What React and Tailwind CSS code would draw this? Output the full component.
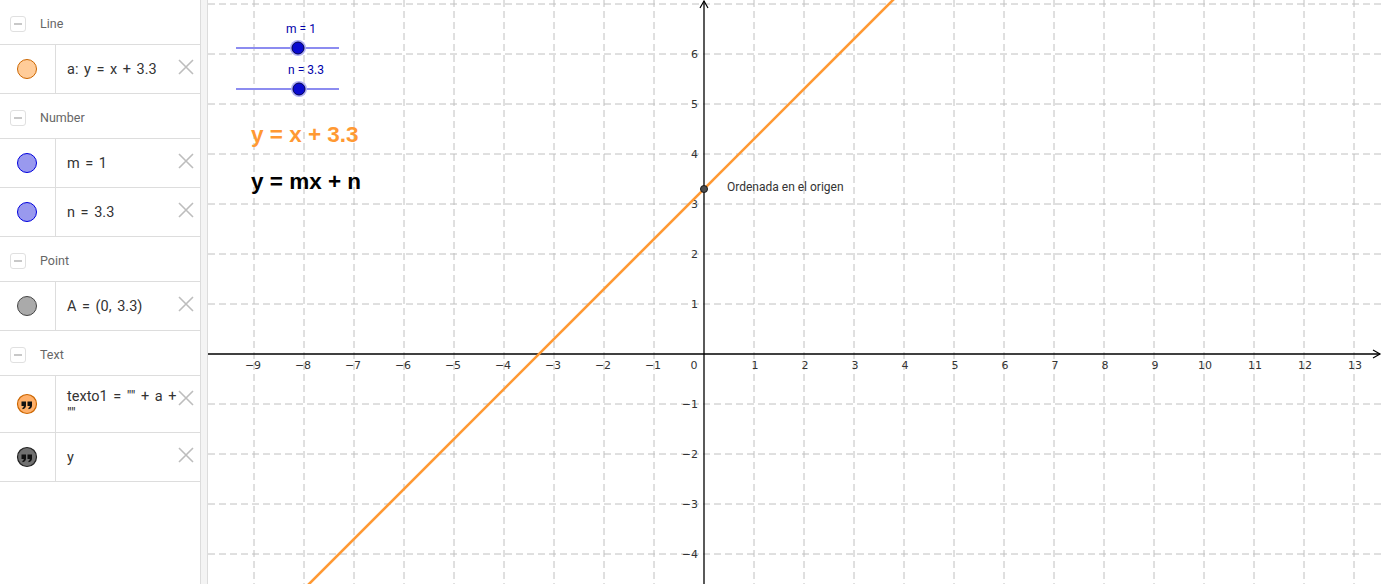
import React from 'react';

const ORANGE = '#ff9933';

function CloseIcon() {
  return (
    <svg width="18" height="18" viewBox="0 0 18 18" className="absolute right-[5px] top-[13px]">
      <path d="M2 2 L16 16 M16 2 L2 16" stroke="#bdbdbd" strokeWidth="1.6" />
    </svg>
  );
}

function Marble({ fill, stroke }) {
  return (
    <svg width="22" height="22" viewBox="0 0 22 22">
      <circle cx="11" cy="11" r="9.5" fill={fill} stroke={stroke} strokeWidth="1" />
    </svg>
  );
}

function QuoteMarble({ fill, stroke }) {
  return (
    <svg width="22" height="22" viewBox="0 0 22 22">
      <circle cx="11" cy="11" r="9.5" fill={fill} stroke={stroke} strokeWidth="1.2" />
      <path d="M5.5 8.5 h4.5 v4 c0 2 -1.2 3.3 -3.3 3.8 l-0.5 -1.2 c1 -0.4 1.6 -1.1 1.6 -2 h-2.3 z" fill="#111" />
      <path d="M11.5 8.5 h4.5 v4 c0 2 -1.2 3.3 -3.3 3.8 l-0.5 -1.2 c1 -0.4 1.6 -1.1 1.6 -2 h-2.3 z" fill="#111" />
    </svg>
  );
}

function GroupHeader({ label }) {
  return (
    <div className="h-[45px] border-b border-[#dddddd] flex items-center pt-[4px]">
      <div className="ml-[10px] w-[16px] h-[16px] rounded-[3px] border border-[#e0e0e0] flex items-center justify-center">
        <div className="w-[8px] h-[2px] bg-[#c8c8c8]" />
      </div>
      <span className="ml-[14px] text-[12.5px] text-[#666666]">{label}</span>
    </div>
  );
}

function Item({ icon, children, tall }) {
  return (
    <div className={`relative flex border-b border-[#dddddd] ${tall ? 'h-[57px]' : 'h-[49px]'}`}>
      <div className="w-[56px] border-r border-[#dddddd] flex items-center justify-center pr-px">{icon}</div>
      <div className="flex-1 flex items-center pl-[11px] text-[14.5px] text-[#333333] leading-[17px] [word-spacing:2px]">{children}</div>
      <CloseIcon />
    </div>
  );
}

function Graph() {
  const vx = [];
  for (let i = -9; i <= 14; i++) if (i !== 0) vx.push(704 + 50 * i);
  const hy = [];
  for (let j = -4; j <= 7; j++) if (j !== 0) hy.push(354 - 50 * j);
  const xl = [];
  for (let i = -9; i <= 13; i++) if (i !== 0) xl.push(i);
  const yl = [];
  for (let j = -4; j <= 6; j++) if (j !== 0) yl.push(j);
  const fmt = (n) => (n < 0 ? '\u2212' + Math.abs(n) : String(n));

  return (
    <svg width="1174" height="584" viewBox="208 0 1174 584" className="block" style={{ fontFamily: 'Roboto, "Liberation Sans", sans-serif' }}>
      <rect x="208" y="0" width="1174" height="584" fill="#ffffff" />
      {vx.map((x) => (
        <line key={'v' + x} x1={x} y1="0" x2={x} y2="584" stroke="#c0c0c0" strokeWidth="1" strokeDasharray="7 4" />
      ))}
      {hy.map((y) => (
        <line key={'h' + y} x1="208" y1={y} x2="1382" y2={y} stroke="#c0c0c0" strokeWidth="1" strokeDasharray="7 4" />
      ))}
      {/* axes */}
      <line x1="208" y1="354" x2="1380" y2="354" stroke="#000" strokeWidth="1.3" />
      <path d="M1373 350 L1380 354 L1373 358" fill="none" stroke="#000" strokeWidth="1.2" />
      <line x1="704" y1="584" x2="704" y2="1" stroke="#000" strokeWidth="1.3" />
      <path d="M700 8 L704 1 L708 8" fill="none" stroke="#000" strokeWidth="1.2" />
      {xl.map((i) => (
        <text key={'xl' + i} x={704 + 50 * i + (i < 0 ? -1 : 1)} y="369" fontSize="11" fill="#333" textAnchor="middle" fontFamily="'DejaVu Sans', sans-serif">
          {fmt(i)}
        </text>
      ))}
      <text x="694" y="369" fontSize="11" fill="#333" textAnchor="middle" fontFamily="'DejaVu Sans', sans-serif">0</text>
      {yl.map((j) => (
        <text key={'yl' + j} x="698" y={354 - 50 * j + 4} fontSize="11" fill="#333" textAnchor="end" fontFamily="'DejaVu Sans', sans-serif">
          {fmt(j)}
        </text>
      ))}
      {/* line y = x + 3.3 */}
      <line x1={704 + 50 * -8.3} y1={354 + 50 * 5} x2={704 + 50 * 3.8} y2={354 - 50 * 7.1} stroke={ORANGE} strokeWidth="2.6" />
      <circle cx="704" cy="189" r="3.5" fill="#4d4d4d" stroke="#1a1a1a" strokeWidth="1" />
      <text x="727" y="191" fontSize="12" fill="#333">Ordenada en el origen</text>

      {/* sliders */}
      <text x="301" y="33" fontSize="12" fill="#0000aa" textAnchor="middle">m = 1</text>
      <line x1="236" y1="48" x2="339" y2="48" stroke="#8c8cf0" strokeWidth="2.2" />
      <circle cx="298" cy="48" r="8" fill="#b0b0f5" />
      <circle cx="298" cy="48" r="6" fill="#0a0ad0" stroke="#000050" strokeWidth="1" />
      <text x="306" y="74" fontSize="12" fill="#0000aa" textAnchor="middle">n = 3.3</text>
      <line x1="236" y1="89" x2="339" y2="89" stroke="#8c8cf0" strokeWidth="2.2" />
      <circle cx="299" cy="89" r="8" fill="#b0b0f5" />
      <circle cx="299" cy="89" r="6" fill="#0a0ad0" stroke="#000050" strokeWidth="1" />

      <text x="251" y="142" fontSize="22.5" fontWeight="bold" fill={ORANGE} fontFamily="'Liberation Sans', Arial, sans-serif">y = x + 3.3</text>
      <text x="251" y="189" fontSize="22.5" fontWeight="bold" fill="#000" fontFamily="'Liberation Sans', Arial, sans-serif">y = mx + n</text>
    </svg>
  );
}

export default function App() {
  return (
    <div className="flex w-[1382px] h-[584px] overflow-hidden bg-white" style={{ fontFamily: 'Roboto, "Liberation Sans", sans-serif' }}>
      <aside className="w-[200px] shrink-0 bg-white">
        <GroupHeader label="Line" />
        <Item icon={<Marble fill="#ffcc99" stroke="#cc6600" />}>a: y = x + 3.3</Item>
        <GroupHeader label="Number" />
        <Item icon={<Marble fill="#9999ee" stroke="#0000dd" />}>m = 1</Item>
        <Item icon={<Marble fill="#9999ee" stroke="#0000dd" />}>n = 3.3</Item>
        <GroupHeader label="Point" />
        <Item icon={<Marble fill="#aaaaaa" stroke="#444444" />}>A = (0, 3.3)</Item>
        <GroupHeader label="Text" />
        <Item tall icon={<QuoteMarble fill="#ffb06a" stroke="#cc6600" />}>
          <span className="block pt-px">
            texto1 = "" + a +<br />""
          </span>
        </Item>
        <Item icon={<QuoteMarble fill="#707070" stroke="#222222" />}>y</Item>
      </aside>
      <div className="w-[8px] shrink-0 bg-[#f4f4f4] border-x border-[#dcdcdc]" />
      <div className="flex-1 overflow-hidden">
        <Graph />
      </div>
    </div>
  );
}
